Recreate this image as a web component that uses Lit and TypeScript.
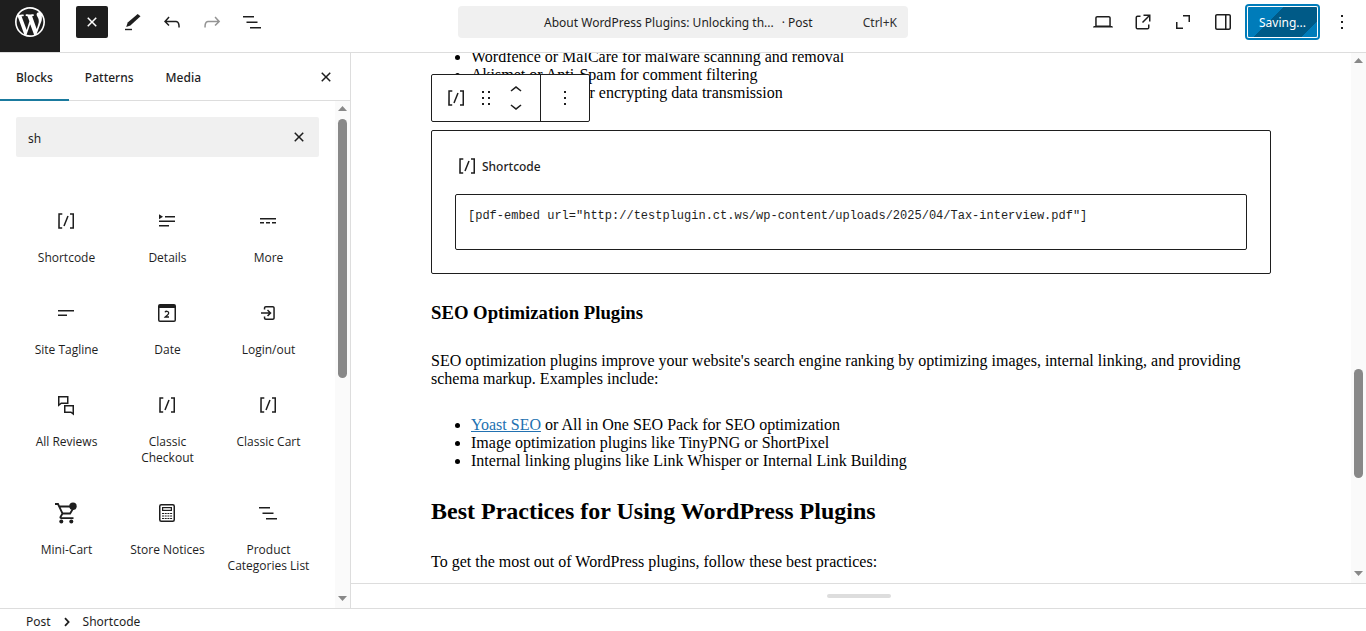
import { LitElement, html, css, svg } from "lit";
import { customElement, property } from "lit/decorators.js";

const p = (d: string) => svg`<path d=${d}></path>`;

const icons: Record<string, unknown> = {
  close: p("M12 13.06l3.712 3.713 1.061-1.06L13.061 12l3.712-3.712-1.06-1.06L12 10.938 8.288 7.227l-1.061 1.06L10.939 12l-3.712 3.712 1.06 1.061L12 13.061z"),
  edit: svg`<path d="m20.500 6.300-2.800-2.400-10 8.600-1.500 4.400 4.200-1.400Z"></path><path d="M5 18.800h7v1.400H5Z"></path>`,
  undo: p("M18.3 11.7c-.6-.6-1.4-.9-2.3-.9H6.7l2.9-3.3-1.1-1-4.500 5L8.500 16l1-1-2.700-2.700H16c.5 0 .9.2 1.300.5 1 1 1 3.400 1 4.500v.3h1.500v-.2c0-1.500 0-4.300-1.500-5.700z"),
  redo: p("M15.600 6.500l-1.100 1 2.900 3.300H8c-.9 0-1.700.3-2.300.9-1.400 1.500-1.400 4.200-1.400 5.600v.2h1.500v-.3c0-1.100 0-3.500 1-4.500.3-.3.7-.5 1.300-.5h9.200L14.500 15l1.100 1.100 4.600-4.600-4.600-5z"),
  list: p("M3 6h11v1.500H3V6Zm3.500 5.500h11V13h-11v-1.500ZM21 17H10v1.500h11V17Z"),
  shortcode: p("M16 4.200v1.500h2.500v12.500H16v1.500h4V4.200h-4zM4.200 19.800h4v-1.500H5.800V5.800h2.500V4.200h-4l-.1 15.600zm5.100-3.100l1.400.6 4-10-1.400-.6-4 10z"),
  details: p("M4 16h10v1.500H4V16Zm0-4.500h16V13H4v-1.500ZM10 7h10v1.500H10V7ZM4 5.250l4 2.500-4 2.500v-5Z"),
  more: p("M4 9v1.500h16V9H4zm12 5.500h4V13h-4v1.500zm-6 0h4V13h-4v1.500zm-6 0h4V13H4v1.500z"),
  tagline: p("M4 10.500h16V9H4v1.500ZM4 15h9v-1.500H4V15Z"),
  date: svg`<path fill-rule="evenodd" d="M5 3h14a2 2 0 0 1 2 2v14a2 2 0 0 1-2 2H5a2 2 0 0 1-2-2V5a2 2 0 0 1 2-2Zm-.5 4v12a.5.5 0 0 0 .5.5h14a.5.5 0 0 0 .5-.5V7Z"></path><path d="M10 11.200c.8-1.500 3.700-1.200 3.700.7 0 1.600-2 2.500-3.500 4.100h3.800" fill="none" stroke="currentColor" stroke-width="1.300"></path>`,
  login: p("M11 14.500l1.100 1.100 3-3 .5-.5-.6-.6-3-3-1 1 1.700 1.700H5v1.500h7.700L11 14.500zM16.800 5h-7c-1.100 0-2 .9-2 2v1.500h1.500V7c0-.3.2-.5.5-.5h7c.3 0 .5.2.5.5v10c0 .3-.2.5-.5.5h-7c-.3 0-.5-.2-.5-.5v-1.500H7.800V17c0 1.100.9 2 2 2h7c1.100 0 2-.9 2-2V7c0-1.100-.9-2-2-2z"),
  reviews: svg`<g fill="none" stroke="currentColor" stroke-width="1.500"><path d="M4.750 3.750h9v6.500h-6.500l-2.500 2v-8.500Z"></path><path d="M10.750 12.750h8.500v8.200l-2.300-1.700h-6.200v-6.500Z"></path></g>`,
  cart: svg`<g fill="none" stroke="currentColor" stroke-width="1.800"><path d="M1 3h3l4.500 9.500h7.600l3-5M5.200 5.500H17M8.500 12.500l-2 3.500c-.3.600 0 1.200.8 1.200h12.200"></path></g><circle cx="19" cy="5.300" r="3.700"></circle><circle cx="7.300" cy="20.500" r="2"></circle><circle cx="17.300" cy="20.500" r="2"></circle>`,
  notices: svg`<rect x="4.750" y="3.750" width="14.500" height="16.500" rx="1.500" fill="none" stroke="currentColor" stroke-width="1.500"></rect><rect x="7.600" y="6.600" width="8.800" height="2.800" fill="none" stroke="currentColor" stroke-width="1.200"></rect><path d="M7 12h2v1H7Zm2.700 0h2v1h-2Zm2.700 0h2v1h-2Zm2.700 0h2v1h-2ZM7 14.500h2v1H7Zm2.700 0h2v1h-2Zm2.700 0h2v1h-2Zm2.700 0h2v1h-2ZM7 17h2v1H7Zm2.700 0h2v1h-2Zm2.700 0h2v1h-2Zm2.700 0h2v1h-2Z"></path>`,
  desktop: p("M20.500 16h-.7V8c0-1.100-.9-2-2-2H6.200c-1.100 0-2 .9-2 2v8h-.7c-.8 0-1.500.7-1.500 1.500h20c0-.8-.7-1.500-1.500-1.500zM5.700 8c0-.3.2-.5.5-.5h11.600c.3 0 .5.2.5.5v7.600H5.700V8z"),
  external: p("M19.500 4.500h-7V6h4.440l-5.970 5.970 1.060 1.060L18 7.060v4.440h1.500v-7Zm-13 1a2 2 0 0 0-2 2v10a2 2 0 0 0 2 2h10a2 2 0 0 0 2-2v-3H17v3a.5.5 0 0 1-.5.5h-10a.5.5 0 0 1-.5-.5v-10a.5.5 0 0 1 .5-.5h3V5.500h-3Z"),
  expand: p("M12 5h7v7h-1.500V6.500H12ZM5 12h1.500v5.500H12V19H5Z"),
  drawer: p("M18 4H6c-1.100 0-2 .9-2 2v12c0 1.100.9 2 2 2h12c1.100 0 2-.9 2-2V6c0-1.100-.9-2-2-2zm-4 14.500H6c-.3 0-.5-.2-.5-.5V6c0-.3.2-.5.5-.5h8v13zm4.500-.5c0 .3-.2.5-.5.5h-2.500v-13H18c.3 0 .5.2.5.5v12z"),
  kebab: p("M13 19h-2v-2h2v2zm0-6h-2v-2h2v2zm0-6h-2V5h2v2z"),
  drag: p("M8 7h2V5H8v2zm0 6h2v-2H8v2zm0 6h2v-2H8v2zm6-14v2h2V5h-2zm0 8h2v-2h-2v2zm0 6h2v-2h-2v2z"),
  up: p("M6.500 12.400L12 8l5.500 4.400-.9 1.200L12 10l-4.500 3.600-1-1.200z"),
  down: p("M17.500 11.600L12 16l-5.500-4.400.9-1.200L12 14l4.500-3.600 1 1.200z"),
  right: svg`<path d="m10 8.200 3.600 3.800-3.600 3.800" fill="none" stroke="currentColor" stroke-width="1.800"></path>`,
  wordpress: p("M20 10c0-5.510-4.490-10-10-10C4.480 0 0 4.490 0 10c0 5.520 4.480 10 10 10 5.510 0 10-4.480 10-10zM7.780 15.370L4.370 6.220c.55-.02 1.170-.08 1.170-.08.5-.06.44-1.130-.06-1.110 0 0-1.450.11-2.370.11-.18 0-.37 0-.58-.01C4.120 2.690 6.870 1.110 10 1.110c2.330 0 4.450.87 6.050 2.340-.68-.11-1.650.39-1.650 1.580 0 .74.45 1.360.9 2.100.35.61.55 1.360.55 2.460 0 1.490-1.400 5-1.400 5l-3.030-8.370c.54-.02.82-.17.82-.17.5-.05.44-1.250-.06-1.220 0 0-1.440.12-2.380.12-.87 0-2.330-.12-2.330-.12-.5-.03-.56 1.200-.06 1.220l.92.08 1.260 3.410zM17.410 10c.24-.64.74-1.870.43-4.250.7 1.290 1.050 2.710 1.050 4.250 0 3.290-1.730 6.240-4.400 7.780.97-2.590 1.940-5.200 2.920-7.780zM6.100 18.090C3.120 16.650 1.110 13.530 1.110 10c0-1.300.23-2.480.72-3.590C3.250 10.300 4.670 14.200 6.100 18.090zm4.030-6.630l2.580 6.980c-.86.29-1.760.45-2.710.45-.79 0-1.570-.11-2.290-.33.81-2.380 1.620-4.740 2.420-7.100z"),
};

@customElement("wp-icon")
class WpIcon extends LitElement {
  @property() name = "";
  @property() box = "0 0 24 24";
  static styles = css`
    :host { display: block; flex: none; width: 24px; height: 24px; }
    svg { display: block; width: 100%; height: 100%; fill: currentColor; }
  `;
  render() {
    return html`<svg viewBox=${this.box} aria-hidden="true">${icons[this.name]}</svg>`;
  }
}

@customElement("scroll-rail")
class ScrollRail extends LitElement {
  @property({ type: Number }) start = 0;
  @property({ type: Number }) size = 50;
  static styles = css`
    :host { display: flex; flex-direction: column; flex: none; width: 15px; background: #fafafa; color: #888; }
    .arrow { display: block; width: 15px; height: 18px; fill: currentColor; }
    .track { flex: 1; min-height: 0; display: flex; flex-direction: column; align-items: center; }
    .thumb { width: 9px; border-radius: 5px; background: currentColor; }
  `;
  render() {
    return html`
      <svg class="arrow" viewBox="0 0 15 18"><path d="M7.500 5 12 10H3Z"></path></svg>
      <div class="track">
        <div style="height:${this.start}%"></div>
        <div class="thumb" style="height:${this.size}%"></div>
      </div>
      <svg class="arrow" viewBox="0 0 15 18"><path d="M3 6h9l-4.500 5Z"></path></svg>
    `;
  }
}

const blocks = [
  ["shortcode", "Shortcode"],
  ["details", "Details"],
  ["more", "More"],
  ["tagline", "Site Tagline"],
  ["date", "Date"],
  ["login", "Login/out"],
  ["reviews", "All Reviews"],
  ["shortcode", "Classic Checkout"],
  ["shortcode", "Classic Cart"],
  ["cart", "Mini-Cart"],
  ["notices", "Store Notices"],
  ["list", "Product Categories List"],
];

const button = css`
  * { box-sizing: border-box; }
  button { font: inherit; color: inherit; background: none; border: 0; margin: 0; padding: 0; cursor: pointer; }
  .icon-button { display: flex; align-items: center; justify-content: center; flex: none; width: 32px; height: 32px; border-radius: 2px; }
`;

@customElement("editor-header")
class EditorHeader extends LitElement {
  static styles = [button, css`
    :host { display: grid; grid-template-columns: 1fr minmax(0, 450px) 1fr; height: 53px; border-bottom: 1px solid #ddd; background: #fff; }
    .left, .right { display: flex; align-items: flex-start; gap: 8px; }
    .left > button, .right > button, .command { margin-top: 6px; }
    .right { justify-content: flex-end; padding-right: 8px; }
    .home { display: flex; justify-content: center; width: 60px; height: 52px; margin-right: 8px; padding-top: 4px; background: #1e1e1e; color: #fff; }
    .home wp-icon { width: 36px; height: 36px; }
    .toggle { background: #1e1e1e; color: #fff; }
    .dim { color: #949494; }
    .command { display: flex; align-items: center; height: 32px; padding: 2px 11px 0 36px; background: #f0f0f0; border-radius: 4px; }
    .title { flex: 1; min-width: 0; white-space: nowrap; overflow: hidden; }
    .kind { margin-left: 8px; }
    .keys { color: #2f2f2f; }
    .save { height: 32px; padding: 2px 12px 0; border-radius: 2px; color: #fff;
      background: linear-gradient(-45deg, #007cba 17%, #005a87 17%, #005a87 64%, #007cba 64%);
      box-shadow: inset 0 0 0 1px #fff, 0 0 0 2px #007cba; }
  `];
  render() {
    return html`
      <div class="left">
        <a class="home" href="#" aria-label="View posts"><wp-icon name="wordpress" box="-2 -2 24 24"></wp-icon></a>
        <button class="icon-button toggle" aria-label="Close block inserter"><wp-icon name="close"></wp-icon></button>
        <button class="icon-button" aria-label="Tools"><wp-icon name="edit"></wp-icon></button>
        <button class="icon-button" aria-label="Undo"><wp-icon name="undo"></wp-icon></button>
        <button class="icon-button dim" aria-label="Redo"><wp-icon name="redo"></wp-icon></button>
        <button class="icon-button" aria-label="Document overview"><wp-icon name="list"></wp-icon></button>
      </div>
      <button class="command">
        <span class="title">About WordPress Plugins: Unlocking th...<span class="kind">· Post</span></span>
        <span class="keys">Ctrl+K</span>
      </button>
      <div class="right">
        <button class="icon-button" aria-label="View"><wp-icon name="desktop"></wp-icon></button>
        <button class="icon-button" aria-label="View post"><wp-icon name="external"></wp-icon></button>
        <button class="icon-button" aria-label="Fullscreen"><wp-icon name="expand"></wp-icon></button>
        <button class="icon-button" aria-label="Settings"><wp-icon name="drawer"></wp-icon></button>
        <button class="save">Saving...</button>
        <button class="icon-button" aria-label="Options"><wp-icon name="kebab"></wp-icon></button>
      </div>
    `;
  }
}

@customElement("block-inserter")
class BlockInserter extends LitElement {
  static styles = [button, css`
    :host { display: flex; flex-direction: column; min-height: 0; border-right: 1px solid #ddd; background: #fff; }
    .tabs { display: flex; height: 48px; flex: none; border-bottom: 1px solid #ddd; font-weight: 500; }
    .tab { height: 48px; padding: 2px 16px 0; }
    .tab[aria-selected="true"] { box-shadow: inset 0 -2px 0 #1a7a9e; }
    .tabs .icon-button { margin: 8px 8px 0 auto; }
    .scroll { flex: 1; min-height: 0; display: flex; }
    .panel { flex: 1; min-width: 0; overflow: hidden; padding: 16px; }
    .search { display: flex; align-items: center; height: 40px; margin-bottom: 32px; padding: 0 4px 0 12px; background: #f0f0f0; border-radius: 2px; }
    .search input { flex: 1; min-width: 0; height: 40px; padding: 2px 0 0; border: 0; outline: 0; background: none; font: inherit; color: inherit; }
    .blocks { display: grid; grid-template-columns: repeat(3, 1fr); }
    .block { display: flex; flex-direction: column; align-items: center; justify-content: flex-start; padding: 20px 8px 15px; font: 12px/16px "Open Sans", sans-serif; }
    .block wp-icon { margin: 0 1px 17px 0; }
  `];
  render() {
    return html`
      <div class="tabs" role="tablist">
        <button class="tab" role="tab" aria-selected="true">Blocks</button>
        <button class="tab" role="tab" aria-selected="false">Patterns</button>
        <button class="tab" role="tab" aria-selected="false">Media</button>
        <button class="icon-button" aria-label="Close"><wp-icon name="close"></wp-icon></button>
      </div>
      <div class="scroll">
        <div class="panel">
          <div class="search">
            <input type="text" aria-label="Search" .value=${"sh"} />
            <button class="icon-button" aria-label="Reset search"><wp-icon name="close"></wp-icon></button>
          </div>
          <div class="blocks">
            ${blocks.map(([icon, label]) => html`
              <button class="block"><wp-icon name=${icon}></wp-icon><span>${label}</span></button>`)}
          </div>
        </div>
        <scroll-rail .start=${0} .size=${55}></scroll-rail>
      </div>
    `;
  }
}

@customElement("post-canvas")
class PostCanvas extends LitElement {
  static styles = [button, css`
    :host { display: flex; min-height: 0; background: #fff; }
    .page { flex: 1; min-width: 0; display: flex; flex-direction: column; justify-content: flex-end; overflow: hidden; padding: 0 16px 12px; }
    .content { display: flex; flex-direction: column; gap: 28px; width: 100%; max-width: 840px; margin: 0 auto; color: #000; font: 16px/18px "Liberation Serif", serif; }
    h2, h3, p, ul { margin: 0; }
    h2 { font-size: 24px; line-height: 27px; }
    h3 { font-size: 1.17em; line-height: 22px; }
    ul { padding-left: 40px; }
    .content a { color: #2271b1; }
    .shortcode { position: relative; border: 1px solid #1e1e1e; border-radius: 2px; padding: 23px; color: #1e1e1e; font: 12px/24px "Noto Sans", sans-serif; }
    .heading { display: flex; align-items: center; gap: 3px; height: 24px; margin-bottom: 16px; font-weight: 500; }
    .heading span { padding-top: 2px; }
    textarea { display: block; width: 100%; height: 56px; padding: 12px; border: 1px solid #1e1e1e; border-radius: 2px; resize: none; outline: 0; overflow: hidden; color: #1e1e1e; font: 12px/18px "Liberation Mono", monospace; }
    .toolbar { position: absolute; left: -1px; bottom: calc(100% + 9px); display: flex; height: 48px; background: #fff; border: 1px solid #1e1e1e; border-radius: 2px; }
    .group { display: flex; align-items: center; padding: 0 12px; gap: 6px; }
    .group + .group { border-left: 1px solid #1e1e1e; }
    .movers { display: flex; flex-direction: column; }
    .movers button { height: 16px; display: flex; align-items: center; }
  `];
  render() {
    return html`
      <div class="page">
        <article class="content">
          <ul>
            <li>Wordfence or MalCare for malware scanning and removal</li>
            <li>Akismet or Anti-Spam for comment filtering</li>
            <li>SSL certificates for encrypting data transmission</li>
          </ul>
          <section class="shortcode">
            <div class="toolbar" role="toolbar" aria-label="Block tools">
              <div class="group">
                <button aria-label="Shortcode"><wp-icon name="shortcode"></wp-icon></button>
                <button aria-label="Drag"><wp-icon name="drag"></wp-icon></button>
                <div class="movers">
                  <button aria-label="Move up"><wp-icon name="up"></wp-icon></button>
                  <button aria-label="Move down"><wp-icon name="down"></wp-icon></button>
                </div>
              </div>
              <div class="group">
                <button aria-label="Options"><wp-icon name="kebab"></wp-icon></button>
              </div>
            </div>
            <label class="heading" for="code"><wp-icon name="shortcode"></wp-icon><span>Shortcode</span></label>
            <textarea id="code" spellcheck="false" .value=${'[pdf-embed url="http://testplugin.ct.ws/wp-content/uploads/2025/04/Tax-interview.pdf"]'}></textarea>
          </section>
          <h3>SEO Optimization Plugins</h3>
          <p>SEO optimization plugins improve your website's search engine ranking by optimizing images, internal linking, and providing schema markup. Examples include:</p>
          <ul>
            <li><a href="#">Yoast SEO</a> or All in One SEO Pack for SEO optimization</li>
            <li>Image optimization plugins like TinyPNG or ShortPixel</li>
            <li>Internal linking plugins like Link Whisper or Internal Link Building</li>
          </ul>
          <h2>Best Practices for Using WordPress Plugins</h2>
          <p>To get the most out of WordPress plugins, follow these best practices:</p>
        </article>
      </div>
      <scroll-rail .start=${60.3} .size=${22.1}></scroll-rail>
    `;
  }
}

@customElement("app-root")
class AppRoot extends LitElement {
  static styles = [button, css`
    :host { display: grid; grid-template-rows: auto minmax(0, 1fr) auto; height: 100vh; overflow: hidden; background: #fff; color: #1e1e1e; font: 12px/20px "Noto Sans", sans-serif; }
    .body { display: grid; grid-template-columns: 351px minmax(0, 1fr); min-height: 0; }
    .editor { display: flex; flex-direction: column; min-height: 0; }
    post-canvas { flex: 1; }
    .drawer { display: flex; align-items: center; justify-content: center; width: 100%; height: 25px; border-top: 1px solid #ddd; }
    .handle { width: 64px; height: 4px; border-radius: 2px; background: #ddd; }
    .crumbs { display: flex; align-items: center; height: 23px; padding: 3px 26px 0; border-top: 1px solid #ddd; gap: 4px; }
  `];
  render() {
    return html`
      <editor-header></editor-header>
      <div class="body">
        <block-inserter></block-inserter>
        <main class="editor">
          <post-canvas></post-canvas>
          <button class="drawer" aria-label="Resize meta boxes"><span class="handle"></span></button>
        </main>
      </div>
      <nav class="crumbs" aria-label="Block breadcrumb">
        <button>Post</button>
        <wp-icon name="right"></wp-icon>
        <span>Shortcode</span>
      </nav>
    `;
  }
}
